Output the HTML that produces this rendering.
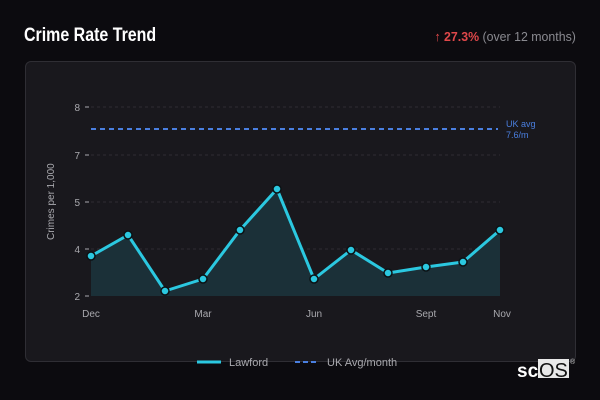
<!DOCTYPE html>
<html><head><style>
body{margin:0;width:600px;height:400px;background:#0c0b0f;font-family:"Liberation Sans",sans-serif;overflow:hidden;position:relative}
.t{position:absolute;left:24px;top:25px;color:#fff;font-size:19px;font-weight:bold;transform:scaleX(0.84);transform-origin:left top}
.r{position:absolute;right:24px;top:29px;font-size:13px;color:#8a8a90;transform:scaleX(0.95);transform-origin:right top}
.r b{color:#e0484a}
.card{position:absolute;left:25px;top:61px;width:549px;height:299px;background:#19181d;border:1px solid #2f2e34;border-radius:6px}
</style></head><body>
<div class="t">Crime Rate Trend</div>
<div class="r"><b>↑ 27.3%</b> (over 12 months)</div>
<div class="card"></div>
<svg width="600" height="400" style="position:absolute;left:0;top:0" font-family="Liberation Sans, sans-serif">
<g stroke="#2e2d33" stroke-dasharray="3,3">
<line x1="91" x2="500" y1="107" y2="107"/><line x1="91" x2="500" y1="155" y2="155"/><line x1="91" x2="500" y1="202" y2="202"/><line x1="91" x2="500" y1="249" y2="249"/>
</g>
<g fill="#a9a9ae" font-size="10" text-anchor="end">
<text x="80" y="111">8</text><text x="80" y="159">7</text><text x="80" y="206">5</text><text x="80" y="253">4</text><text x="80" y="300">2</text>
</g>
<g stroke="#a9a9ae"><line x1="85" x2="89" y1="107" y2="107"/><line x1="85" x2="89" y1="155" y2="155"/><line x1="85" x2="89" y1="202" y2="202"/><line x1="85" x2="89" y1="249" y2="249"/><line x1="85" x2="89" y1="296" y2="296"/></g>
<text transform="translate(54,240) rotate(-90)" fill="#a9a9ae" font-size="10">Crimes per 1,000</text>
<g fill="#a9a9ae" font-size="10" text-anchor="middle">
<text x="91" y="317">Dec</text><text x="203" y="317">Mar</text><text x="314" y="317">Jun</text><text x="426" y="317">Sept</text><text x="502" y="317">Nov</text>
</g>
<line x1="91" x2="498" y1="129" y2="129" stroke="#4a7fe0" stroke-width="2" stroke-dasharray="5,4"/>
<text x="506" y="127" fill="#4a7fe0" font-size="9">UK avg</text>
<text x="506" y="138" fill="#4a7fe0" font-size="9">7.6/m</text>
<path d="M91,256 L128,235 L165,291 L203,279 L240,230 L277,189 L314,279 L351,250 L388,273 L426,267 L463,262 L500,230 L500,296 L91,296Z" fill="#1b3038"/>
<polyline points="91,256 128,235 165,291 203,279 240,230 277,189 314,279 351,250 388,273 426,267 463,262 500,230" fill="none" stroke="#2bc8e0" stroke-width="3" stroke-linejoin="round"/>
<g fill="#2bc8e0" stroke="#0c1215" stroke-width="1.5">
<circle cx="91" cy="256" r="4"/><circle cx="128" cy="235" r="4"/><circle cx="165" cy="291" r="4"/><circle cx="203" cy="279" r="4"/><circle cx="240" cy="230" r="4"/><circle cx="277" cy="189" r="4"/><circle cx="314" cy="279" r="4"/><circle cx="351" cy="250" r="4"/><circle cx="388" cy="273" r="4"/><circle cx="426" cy="267" r="4"/><circle cx="463" cy="262" r="4"/><circle cx="500" cy="230" r="4"/>
</g>
<line x1="197" x2="221" y1="362" y2="362" stroke="#2bc8e0" stroke-width="3"/>
<text x="229" y="366" fill="#a9a9ae" font-size="11">Lawford</text>
<line x1="295" x2="319" y1="362" y2="362" stroke="#4a7fe0" stroke-width="2" stroke-dasharray="5,3"/>
<text x="327" y="366" fill="#a9a9ae" font-size="11">UK Avg/month</text>
<text x="517" y="377" fill="#fff" font-size="19" font-weight="bold">sc</text>
<rect x="538" y="359" width="31" height="19" fill="#e8e8e8"/>
<text x="539" y="377" fill="#111" font-size="20">OS</text>
<text x="570" y="364" fill="#ccc" font-size="7">®</text>
</svg>
</body></html>
